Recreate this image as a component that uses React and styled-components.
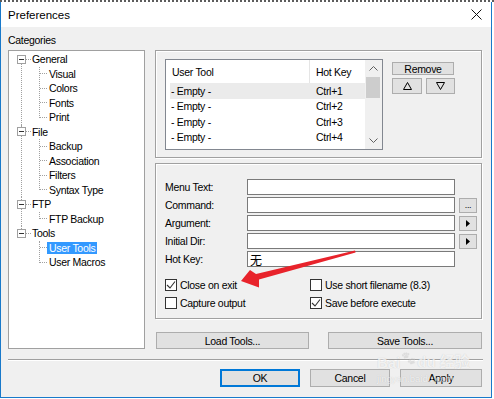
import styled, { createGlobalStyle } from "styled-components";

const GlobalStyle = createGlobalStyle`
  html, body { margin: 0; padding: 0; background: #fff; }
  body {
    font-family: "Liberation Sans", Arial, sans-serif;
    font-size: 10.5px;
    letter-spacing: -0.3px;
    color: #000;
  }
`;

const tree = [
  { label: "General", children: ["Visual", "Colors", "Fonts", "Print"] },
  { label: "File", children: ["Backup", "Association", "Filters", "Syntax Type"] },
  { label: "FTP", children: ["FTP Backup"] },
  { label: "Tools", children: ["User Tools", "User Macros"] },
];

const tools = [
  { name: "- Empty -", key: "Ctrl+1" },
  { name: "- Empty -", key: "Ctrl+2" },
  { name: "- Empty -", key: "Ctrl+3" },
  { name: "- Empty -", key: "Ctrl+4" },
];

const fields = [
  { label: "Menu Text:" },
  { label: "Command:", side: "dots" },
  { label: "Argument:", side: "arrow" },
  { label: "Initial Dir:", side: "arrow" },
  { label: "Hot Key:", value: "无" },
];

export default function App() {
  return (
    <Screen>
      <GlobalStyle />
      <Window>
        <TitleBar>
          <span>Preferences</span>
          <svg width="11" height="11" viewBox="0 0 11 11">
            <path d="M0.5 0.5 L10.5 10.5 M10.5 0.5 L0.5 10.5" stroke="#111" strokeWidth="1" />
          </svg>
        </TitleBar>
        <Body>
          <Main>
            <LeftCol>
              <Caption>Categories</Caption>
              <TreeBox>
                {tree.map((g, gi) => (
                  <Group key={g.label} $first={gi === 0} $last={gi === tree.length - 1}>
                    <NodeRow>
                      <Expander />
                      <Connector $w={5} />
                      <NodeLabel $root>{g.label}</NodeLabel>
                    </NodeRow>
                    <Children>
                      {g.children.map((c) => (
                        <NodeRow key={c} $child>
                          <Connector $w={7} />
                          <NodeLabel $selected={c === "User Tools"}>{c}</NodeLabel>
                        </NodeRow>
                      ))}
                    </Children>
                  </Group>
                ))}
              </TreeBox>
            </LeftCol>

            <RightCol>
              <TopPanel>
                <ListBox>
                  <ListMain>
                    <ListHeader>
                      <HeaderCell $w={144} $divider>User Tool</HeaderCell>
                      <HeaderCell>Hot Key</HeaderCell>
                    </ListHeader>
                    {tools.map((t, i) => (
                      <ListRow key={t.key} $selected={i === 0}>
                        <Cell $w={140}>{t.name}</Cell>
                        <Cell $pl={6}>{t.key}</Cell>
                      </ListRow>
                    ))}
                  </ListMain>
                  <ScrollBar>
                    <ScrollArrow>
                      <svg width="9" height="5" viewBox="0 0 9 5">
                        <path d="M0.5 4.5 L4.5 0.5 L8.5 4.5" fill="none" stroke="#606060" />
                      </svg>
                    </ScrollArrow>
                    <Thumb />
                    <Track />
                    <ScrollArrow>
                      <svg width="9" height="5" viewBox="0 0 9 5">
                        <path d="M0.5 0.5 L4.5 4.5 L8.5 0.5" fill="none" stroke="#606060" />
                      </svg>
                    </ScrollArrow>
                  </ScrollBar>
                </ListBox>
                <SideButtons>
                  <Button $w={62} $h={13}>Remove</Button>
                  <ButtonPair>
                    <Button $w={30} $h={16}>
                      <svg width="9" height="8" viewBox="0 0 9 8">
                        <path d="M4.5 0.5 L8.5 7.5 L0.5 7.5 Z" fill="none" stroke="#000" />
                      </svg>
                    </Button>
                    <Button $w={29} $h={16}>
                      <svg width="9" height="8" viewBox="0 0 9 8">
                        <path d="M0.5 0.5 L8.5 0.5 L4.5 7.5 Z" fill="none" stroke="#000" />
                      </svg>
                    </Button>
                  </ButtonPair>
                </SideButtons>
              </TopPanel>

              <LowerPanel>
                {fields.map((f) => (
                  <FieldRow key={f.label}>
                    <FieldLabel>{f.label}</FieldLabel>
                    <TextBox>{f.value}</TextBox>
                    {f.side === "dots" && <SmallButton>...</SmallButton>}
                    {f.side === "arrow" && (
                      <SmallButton>
                        <svg width="4" height="7" viewBox="0 0 4 7">
                          <path d="M0 0 L4 3.5 L0 7 Z" fill="#000" />
                        </svg>
                      </SmallButton>
                    )}
                  </FieldRow>
                ))}
                <CheckGrid>
                  <Check checked label="Close on exit" />
                  <Check label="Use short filename (8.3)" />
                  <Check label="Capture output" />
                  <Check checked label="Save before execute" />
                </CheckGrid>
              </LowerPanel>

              <ToolButtons>
                <Button $w={153} $h={17}>Load Tools...</Button>
                <Button $w={154} $h={17}>Save Tools...</Button>
              </ToolButtons>
            </RightCol>
          </Main>

          <Separator />

          <DialogButtons>
            <Button $w={80} $h={18} $default>OK</Button>
            <Button $w={80} $h={18}>Cancel</Button>
            <Button $w={82} $h={18}>Apply</Button>
          </DialogButtons>
        </Body>
      </Window>

      <ArrowMark width="494" height="399" viewBox="0 0 494 399">
        <path
          d="M241 281 L250 270 L256 274 L355 250.5 L355.6 252.6 L259 279.5 L259 287.5 Z"
          fill="#e8232b"
        />
      </ArrowMark>

      <Watermark>
        <WatermarkTop>Bai<Paw>🐾</Paw>du 经验</WatermarkTop>
        <WatermarkUrl>jingyan.baidu.com</WatermarkUrl>
      </Watermark>
    </Screen>
  );
}

function Check({ checked, label }) {
  return (
    <CheckRow>
      <CheckBox>
        {checked && (
          <svg width="10" height="10" viewBox="0 0 10 10">
            <path d="M1 5 L4 8 L9 1.5" fill="none" stroke="#333" strokeWidth="1.1" />
          </svg>
        )}
      </CheckBox>
      <span>{label}</span>
    </CheckRow>
  );
}

const Screen = styled.div`
  position: relative;
  width: 494px;
  height: 399px;
  box-sizing: border-box;
  border-top: 2px dotted #5c5c5c;
  overflow: hidden;
`;

const Window = styled.div`
  width: 492px;
  height: 396px;
  box-sizing: border-box;
  border-left: 1px solid #1979ca;
  border-right: 1px solid #1979ca;
  border-bottom: 1px solid #1979ca;
  display: flex;
  flex-direction: column;
`;

const TitleBar = styled.div`
  height: 25px;
  flex: none;
  background: #fff;
  display: flex;
  align-items: center;
  justify-content: space-between;
  padding: 0 9px 0 7px;
  font-size: 11.5px;
  letter-spacing: 0;
`;

const Body = styled.div`
  flex: 1;
  background: #f0f0f0;
  padding: 6px 0 0 7px;
  display: flex;
  flex-direction: column;
`;

const Main = styled.div`
  display: flex;
  gap: 10px;
  align-items: flex-start;
`;

const LeftCol = styled.div`
  width: 137px;
  display: flex;
  flex-direction: column;
`;

const Caption = styled.div`
  height: 14px;
  line-height: 14px;
  margin-bottom: 3px;
`;

const TreeBox = styled.div`
  width: 137px;
  height: 299px;
  box-sizing: border-box;
  border: 1px solid #a0a0a0;
  background: #fff;
  padding-top: 1px;
`;

const Group = styled.div`
  position: relative;
  &::before {
    content: "";
    position: absolute;
    left: 12px;
    top: ${(p) => (p.$first ? "7px" : "0")};
    bottom: ${(p) => (p.$last ? "calc(100% - 7px)" : "0")};
    border-left: 1px dotted #a0a0a0;
  }
`;

const NodeRow = styled.div`
  height: 14.5px;
  display: flex;
  align-items: center;
  padding-left: ${(p) => (p.$child ? "31px" : "8px")};
`;

const Expander = styled.span`
  position: relative;
  z-index: 1;
  width: 9px;
  height: 9px;
  box-sizing: border-box;
  border: 1px solid #a0a0a0;
  background: #fff;
  display: flex;
  align-items: center;
  justify-content: center;
  &::after {
    content: "";
    width: 5px;
    height: 1px;
    background: #333;
  }
`;

const Connector = styled.span`
  width: ${(p) => p.$w}px;
  height: 0;
  border-top: 1px dotted #a0a0a0;
`;

const Children = styled.div`
  position: relative;
  &::before {
    content: "";
    position: absolute;
    left: 30px;
    top: 0;
    bottom: 7px;
    border-left: 1px dotted #a0a0a0;
  }
`;

const NodeLabel = styled.span`
  height: 12px;
  line-height: 12px;
  padding: ${(p) => (p.$root ? "0 1px" : "0 2px")};
  background: ${(p) => (p.$selected ? "#3399ff" : "transparent")};
  color: ${(p) => (p.$selected ? "#fff" : "#000")};
  white-space: nowrap;
`;

const RightCol = styled.div`
  width: 327px;
  margin-top: 17px;
  display: flex;
  flex-direction: column;
`;

const Panel = styled.div`
  box-sizing: border-box;
  border: 1px solid #a0a0a0;
  box-shadow: inset 1px 1px 0 #fff, 1px 1px 0 #fff;
`;

const TopPanel = styled(Panel)`
  height: 108px;
  padding: 8px 0 0 9px;
  display: flex;
  align-items: flex-start;
  gap: 9px;
`;

const ListBox = styled.div`
  width: 218px;
  height: 91px;
  box-sizing: border-box;
  border: 1px solid #828790;
  background: #fff;
  display: flex;
`;

const ListMain = styled.div`
  flex: 1;
  display: flex;
  flex-direction: column;
`;

const ListHeader = styled.div`
  height: 23px;
  display: flex;
`;

const HeaderCell = styled.div`
  width: ${(p) => (p.$w ? `${p.$w}px` : "auto")};
  box-sizing: border-box;
  padding-left: 6px;
  display: flex;
  align-items: center;
  border-right: ${(p) => (p.$divider ? "1px solid #e5e5e5" : "none")};
`;

const ListRow = styled.div`
  height: 15.5px;
  margin-left: 4px;
  display: flex;
  align-items: center;
  background: ${(p) => (p.$selected ? "#ebebeb" : "transparent")};
`;

const Cell = styled.div`
  width: ${(p) => (p.$w ? `${p.$w}px` : "auto")};
  padding-left: ${(p) => p.$pl || 1}px;
  box-sizing: border-box;
  white-space: nowrap;
`;

const ScrollBar = styled.div`
  width: 17px;
  background: #f0f0f0;
  display: flex;
  flex-direction: column;
`;

const ScrollArrow = styled.div`
  height: 17px;
  display: flex;
  align-items: center;
  justify-content: center;
`;

const Thumb = styled.div`
  height: 21px;
  margin: 0 2px 0 1px;
  background: #cdcdcd;
`;

const Track = styled.div`
  flex: 1;
`;

const SideButtons = styled.div`
  margin-top: 3px;
  display: flex;
  flex-direction: column;
  gap: 3px;
`;

const ButtonPair = styled.div`
  display: flex;
  gap: 4px;
`;

const Button = styled.div`
  width: ${(p) => p.$w}px;
  height: ${(p) => p.$h}px;
  box-sizing: border-box;
  background: #e1e1e1;
  border: 1px solid ${(p) => (p.$default ? "#0078d7" : "#adadad")};
  box-shadow: ${(p) => (p.$default ? "inset 0 0 0 1px #0078d7" : "none")};
  display: flex;
  align-items: center;
  justify-content: center;
  white-space: nowrap;
`;

const LowerPanel = styled(Panel)`
  height: 156px;
  margin-top: 5px;
  padding: 15px 0 0 9px;
`;

const FieldRow = styled.div`
  height: 16px;
  margin-bottom: 2px;
  display: flex;
  align-items: center;
`;

const FieldLabel = styled.div`
  width: 82px;
  white-space: nowrap;
`;

const TextBox = styled.div`
  width: 208px;
  height: 16px;
  box-sizing: border-box;
  border: 1px solid #7a7a7a;
  background: #fff;
  padding-left: 2px;
  display: flex;
  align-items: center;
  font-family: "Liberation Sans", "Noto Sans CJK SC", sans-serif;
  font-size: 12px;
`;

const SmallButton = styled.div`
  width: 18px;
  height: 15px;
  margin-left: 4px;
  box-sizing: border-box;
  background: #e1e1e1;
  border: 1px solid #adadad;
  display: flex;
  align-items: center;
  justify-content: center;
  font-size: 9px;
  line-height: 9px;
`;

const CheckGrid = styled.div`
  margin-top: 12px;
  display: grid;
  grid-template-columns: 145px 1fr;
  row-gap: 6px;
`;

const CheckRow = styled.div`
  height: 12px;
  display: flex;
  align-items: center;
  gap: 3px;
  white-space: nowrap;
`;

const CheckBox = styled.span`
  width: 12px;
  height: 12px;
  flex: none;
  box-sizing: border-box;
  border: 1px solid #333;
  background: #fff;
  display: flex;
  align-items: center;
  justify-content: center;
`;

const ToolButtons = styled.div`
  margin-top: 13px;
  padding-left: 1px;
  display: flex;
  justify-content: space-between;
`;

const Separator = styled.div`
  width: 475px;
  margin-top: 10px;
  border-top: 1px solid #a0a0a0;
  border-bottom: 1px solid #fff;
`;

const DialogButtons = styled.div`
  width: 474px;
  margin-top: 8px;
  display: flex;
  justify-content: flex-end;
  gap: 10px;
`;

const ArrowMark = styled.svg`
  position: absolute;
  top: -2px;
  left: 0;
  pointer-events: none;
`;

const Watermark = styled.div`
  position: absolute;
  left: 377px;
  top: 343px;
  color: rgba(255, 255, 255, 0.75);
  text-shadow: 0 0 1px rgba(0, 0, 0, 0.18);
  pointer-events: none;
  letter-spacing: 0;
`;

const WatermarkTop = styled.div`
  font-family: "Liberation Sans", "Noto Sans CJK SC", sans-serif;
  font-size: 15px;
  font-weight: bold;
  display: flex;
  align-items: flex-end;
  height: 26px;
`;

const Paw = styled.span`
  font-size: 12px;
  margin: 0 1px 6px;
  opacity: 0.6;
  filter: grayscale(1) brightness(2.2);
`;

const WatermarkUrl = styled.div`
  font-size: 9.5px;
  margin-top: 2px;
`;
